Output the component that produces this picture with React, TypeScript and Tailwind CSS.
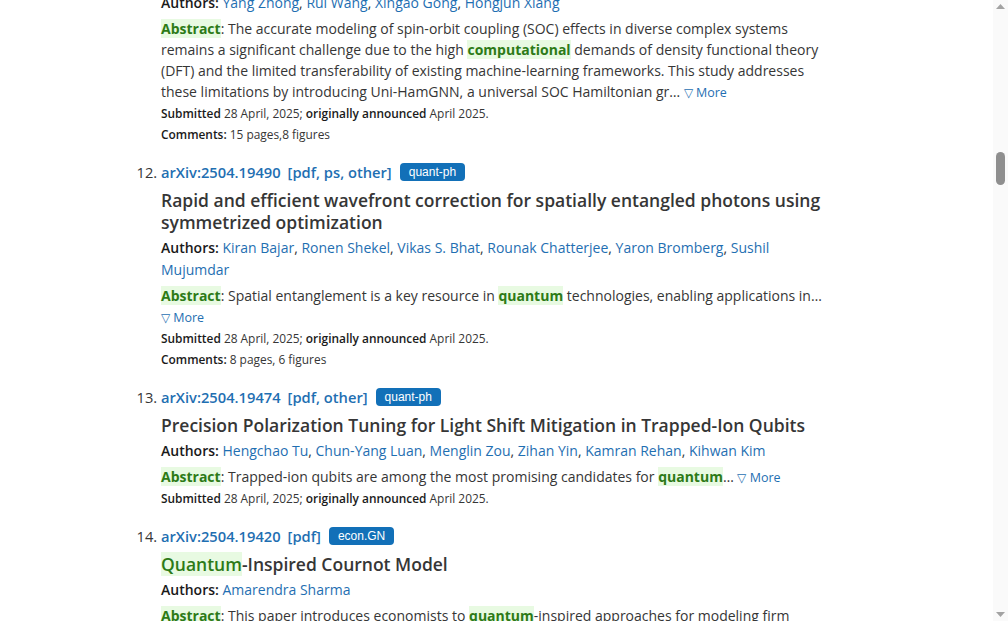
import React from "react";

const LINK = "text-[#1f6fb2]";
const HIT = "bg-[#e8fae2] text-[#2d7a17]";

function Hit({ children, bold = true }: { children: React.ReactNode; bold?: boolean }) {
  return <span className={`${HIT} ${bold ? "font-bold" : ""}`}>{children}</span>;
}

function Authors({ names }: { names: string[] }) {
  return (
    <p className="mt-1 text-[14px] leading-[22px] text-[#363636]">
      <span className="font-semibold text-[#1a1a1a]">Authors:</span>{" "}
      {names.map((n, i) => (
        <React.Fragment key={n}>
          <a className={LINK}>{n}</a>
          {i < names.length - 1 ? ", " : ""}
        </React.Fragment>
      ))}
    </p>
  );
}

function More() {
  return (
    <a className={`${LINK} text-[12.5px] whitespace-nowrap`}>
      <span className="text-[11.5px]">▽</span> More
    </a>
  );
}

function Submitted() {
  return (
    <p className="text-[11.9px] leading-[21px] text-[#363636]">
      <span className="font-semibold text-[#1a1a1a]">Submitted</span> 28 April, 2025;{" "}
      <span className="font-semibold text-[#1a1a1a]">originally announced</span> April 2025.
    </p>
  );
}

function Comments({ text }: { text: string }) {
  return (
    <p className="text-[11.9px] leading-[21px] text-[#363636]">
      <span className="font-semibold text-[#1a1a1a]">Comments:</span> {text}
    </p>
  );
}

function Header({ id, links, tag }: { id: string; links: string[]; tag: string }) {
  return (
    <div className="flex items-center text-[14.7px] leading-[24px]">
      <a className={`${LINK} font-semibold`}>arXiv:{id}</a>
      <span className="ml-[7px] text-[#1f6fb2] font-semibold">
        [
        {links.map((l, i) => (
          <React.Fragment key={l}>
            <a>{l}</a>
            {i < links.length - 1 ? ", " : ""}
          </React.Fragment>
        ))}
        ]
      </span>
      <span
        className="ml-[8px] inline-flex h-[18px] items-center rounded-[4px] bg-[#1270b8] px-[9px] text-[12px] text-white"
        style={{ fontFamily: '"Liberation Sans", Arial, sans-serif' }}
      >
        {tag}
      </span>
    </div>
  );
}

function Title({ children }: { children: React.ReactNode }) {
  return <p className="mt-[5px] text-[17.5px] leading-[22px] font-semibold text-[#363636]">{children}</p>;
}

function Abstract({ children }: { children: React.ReactNode }) {
  return (
    <p className="mt-1 text-[14px] leading-[21px] text-[#363636]">
      <span className={`${HIT} font-bold`}>Abstract</span>: {children}
    </p>
  );
}

export default function App() {
  return (
    <div
      className="flex h-screen w-full overflow-hidden bg-white"
      style={{ fontFamily: '"Open Sans", "Noto Sans", sans-serif' }}
    >
      <main className="flex-1 overflow-hidden">
        <ol start={11} className="ml-[161px] mt-[-8px] w-[670px] list-decimal text-[#363636]">
          <li className="list-none">
            <p className="text-[14px] leading-[22px] text-[#363636]">
              <span className="font-semibold text-[#1a1a1a]">Authors:</span>{" "}
              <a className={LINK}>Yang Zhong</a>, <a className={LINK}>Rui Wang</a>,{" "}
              <a className={LINK}>Xingao Gong</a>, <a className={LINK}>Hongjun Xiang</a>
            </p>
            <Abstract>
              The accurate modeling of spin-orbit coupling (SOC) effects in diverse complex systems remains a
              significant challenge due to the high <Hit>computational</Hit> demands of density functional theory
              (DFT) and the limited transferability of existing machine-learning frameworks. This study addresses
              these limitations by introducing Uni-HamGNN, a universal SOC Hamiltonian gr…{" "}
              <More />
            </Abstract>
            <Submitted />
            <Comments text="15 pages,8 figures" />
          </li>

          <li className="mt-[15px] text-[14.7px] marker:text-[#363636]">
            <Header id="2504.19490" links={["pdf", "ps", "other"]} tag="quant-ph" />
            <Title>Rapid and efficient wavefront correction for spatially entangled photons using symmetrized optimization</Title>
            <Authors
              names={["Kiran Bajar", "Ronen Shekel", "Vikas S. Bhat", "Rounak Chatterjee", "Yaron Bromberg", "Sushil Mujumdar"]}
            />
            <Abstract>
              Spatial entanglement is a key resource in <Hit>quantum</Hit> technologies, enabling applications in…{" "}
              <More />
            </Abstract>
            <Submitted />
            <Comments text="8 pages, 6 figures" />
          </li>

          <li className="mt-[15px] text-[14.7px] marker:text-[#363636]">
            <Header id="2504.19474" links={["pdf", "other"]} tag="quant-ph" />
            <Title>Precision Polarization Tuning for Light Shift Mitigation in Trapped-Ion Qubits</Title>
            <Authors names={["Hengchao Tu", "Chun-Yang Luan", "Menglin Zou", "Zihan Yin", "Kamran Rehan", "Kihwan Kim"]} />
            <Abstract>
              Trapped-ion qubits are among the most promising candidates for <Hit>quantum</Hit>…{" "}
              <More />
            </Abstract>
            <Submitted />
          </li>

          <li className="mt-[15px] text-[14.7px] marker:text-[#363636]">
            <Header id="2504.19420" links={["pdf"]} tag="econ.GN" />
            <Title>
              <Hit bold={false}>Quantum</Hit>-Inspired Cournot Model
            </Title>
            <Authors names={["Amarendra Sharma"]} />
            <Abstract>
              This paper introduces economists to <Hit>quantum</Hit>-inspired approaches for modeling firm behavior
              and strategic interactions in markets.
            </Abstract>
          </li>
        </ol>
      </main>
      <div className="flex w-[15px] flex-col items-center bg-[#fafafa]">
        <svg width="9" height="6" viewBox="0 0 9 6" className="mt-[3px]">
          <path d="M0 6 L4.5 1 L9 6 Z" fill="#a3a3a3" />
        </svg>
        <div className="mt-[143px] h-[33px] w-[9px] rounded-full bg-[#8f8f8f]" />
        <div className="flex-1" />
        <svg width="9" height="6" viewBox="0 0 9 6" className="mb-[3px]">
          <path d="M0 0 L9 0 L4.5 5 Z" fill="#a3a3a3" />
        </svg>
      </div>
    </div>
  );
}
